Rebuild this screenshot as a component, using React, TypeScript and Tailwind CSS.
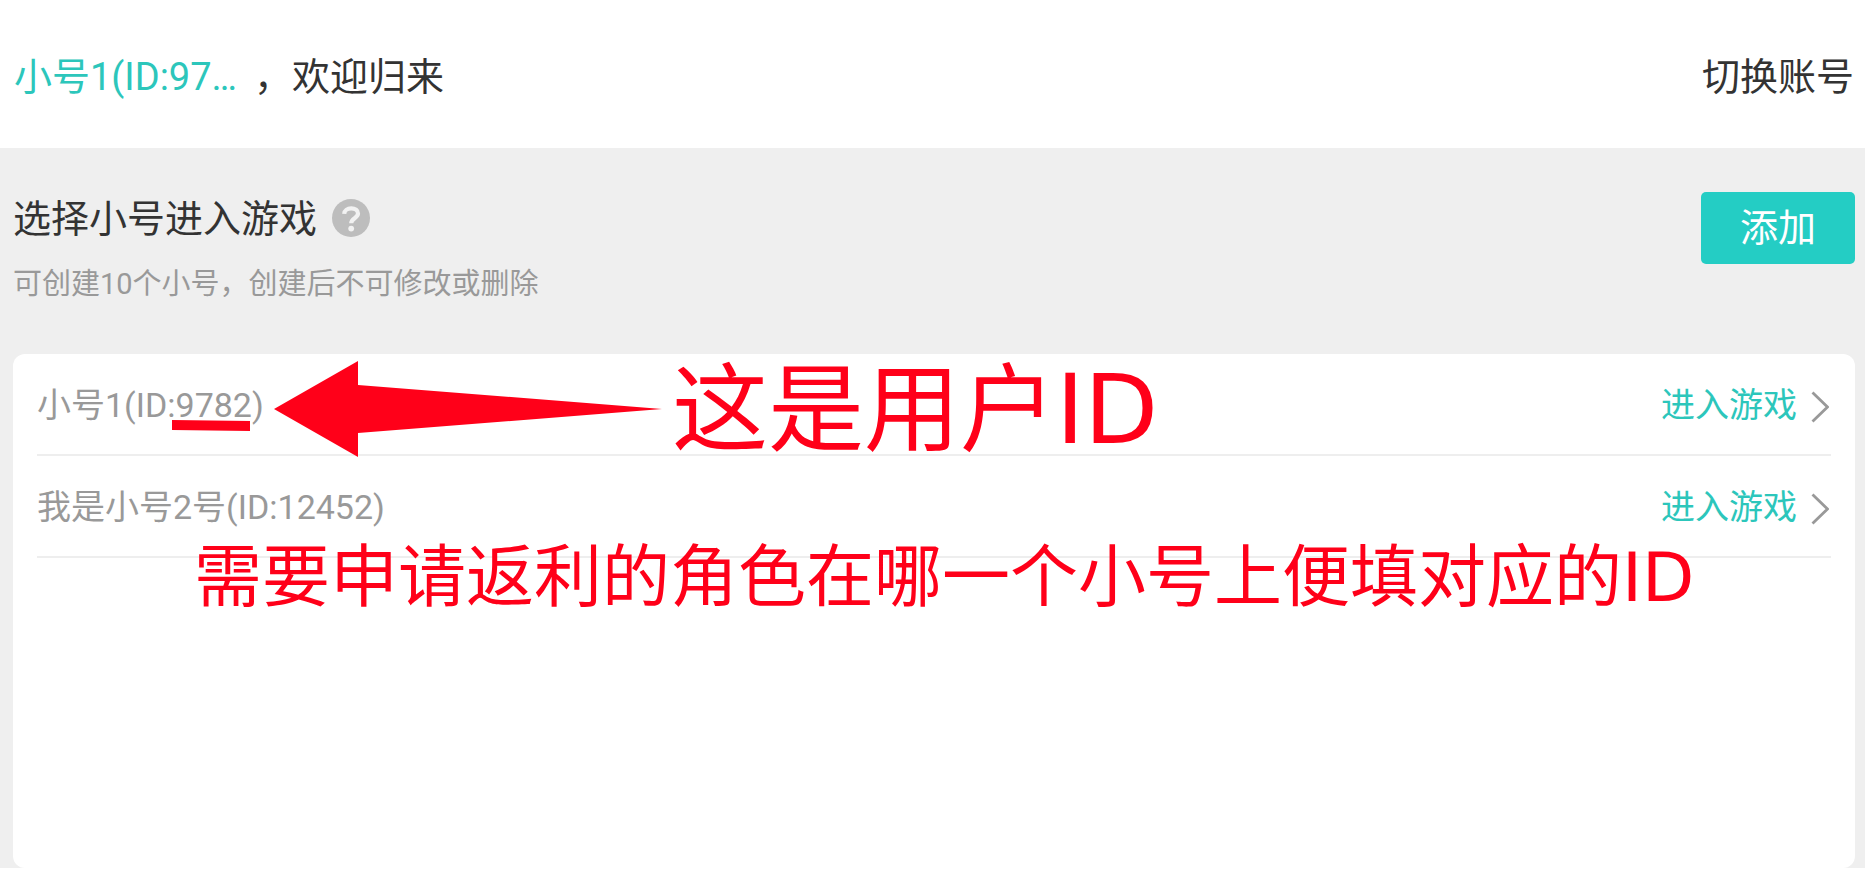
import React, { useState } from 'react';

interface SubAccount {
  id: number;
  name: string;
}

const accounts: SubAccount[] = [
  { id: 9782, name: '小号1' },
  { id: 12452, name: '我是小号2号' },
];

function HelpIcon() {
  return (
    <svg viewBox="0 0 38 38" className="w-[38px] h-[38px]" fill="none" aria-hidden="true">
      <circle cx="19" cy="19" r="19" fill="#bdbdbd" />
      <path
        d="M12.2 14.8C12.4 11.4 15.4 9.4 19.2 9.4c4 0 6.8 2 6.8 5.2 0 4.6-6.8 4.8-6.8 9.6"
        stroke="#f2f2f2"
        strokeWidth="4.2"
      />
      <circle cx="19.2" cy="29.6" r="2.9" fill="#f2f2f2" />
    </svg>
  );
}

function ChevronIcon() {
  return (
    <svg viewBox="0 0 18 32" className="w-[18px] h-8 mt-1" fill="none" aria-hidden="true">
      <path d="M1.5 1.5L16.5 16L1.5 30.5" stroke="#999999" strokeWidth="2.8" />
    </svg>
  );
}

function AccountRow({ account }: { account: SubAccount }) {
  return (
    <li className="flex items-center justify-between h-[102px] pt-[2px] border-b-2 border-[#eeeeee] text-[34px] leading-[50px]">
      <span className="text-[#999999]">
        {account.name}(ID:{account.id})
      </span>
      <button type="button" className="flex items-center gap-[14px] pr-[2px] text-[#2cc6bb]">
        <span>进入游戏</span>
        <ChevronIcon />
      </button>
    </li>
  );
}

export default function App() {
  const [current] = useState<SubAccount>(accounts[0]);
  const shortId = String(current.id).slice(0, 2);

  return (
    <div className="min-h-screen flex flex-col bg-white text-[#333333] font-[Roboto,'Noto_Sans_CJK_SC',sans-serif]">
      <header className="flex items-center justify-between h-[148px] pt-[6px] pl-[14px] pr-[11px] text-[38px] leading-[56px]">
        <div className="flex items-center">
          <span className="w-[240px] text-[#2cc6bb]">
            {current.name}(ID:{shortId}…
          </span>
          <span>，欢迎归来</span>
        </div>
        <button type="button">切换账号</button>
      </header>

      <main className="flex-1 flex flex-col bg-[#efefef] mb-4 px-[13px]">
        <div className="flex items-start justify-between h-[206px] -mr-[3px] pt-11">
          <div>
            <div className="flex items-center gap-[15px]">
              <h1 className="pt-[2px] text-[38px] leading-[50px]">选择小号进入游戏</h1>
              <button type="button" aria-label="帮助">
                <HelpIcon />
              </button>
            </div>
            <p className="mt-[18px] text-[29px] leading-[44px] text-[#999999]">
              可创建10个小号，创建后不可修改或删除
            </p>
          </div>
          <button
            type="button"
            className="w-[154px] h-[72px] rounded-[5px] bg-[#24cdc4] text-white text-[38px] leading-[56px]"
          >
            添加
          </button>
        </div>

        <section className="relative flex-1 -mr-[3px] px-6 rounded-xl bg-white">
          <ul>
            {accounts.map((account) => (
              <AccountRow key={account.id} account={account} />
            ))}
          </ul>

          {/* Red notes drawn over the list */}
          <svg
            viewBox="0 0 500 100"
            className="absolute left-[157px] top-[5px] w-[500px] h-[100px]"
            fill="#ff0019"
            aria-hidden="true"
          >
            <path d="M2 61L80 62V72L2 71Z" />
            <path d="M104 50L188 2V26L492 50L188 74V98Z" />
          </svg>
          <p className="absolute left-[659px] top-1 whitespace-nowrap text-[96px] leading-[104px] text-[#ff0019] font-['DejaVu_Sans','Noto_Sans_CJK_SC',sans-serif]">
            这是用户ID
          </p>
          <p className="absolute left-[181px] top-[180px] whitespace-nowrap text-[68px] leading-[88px] text-[#ff0019] font-['DejaVu_Sans','Noto_Sans_CJK_SC',sans-serif]">
            需要申请返利的角色在哪一个小号上便填对应的ID
          </p>
        </section>
      </main>
    </div>
  );
}
